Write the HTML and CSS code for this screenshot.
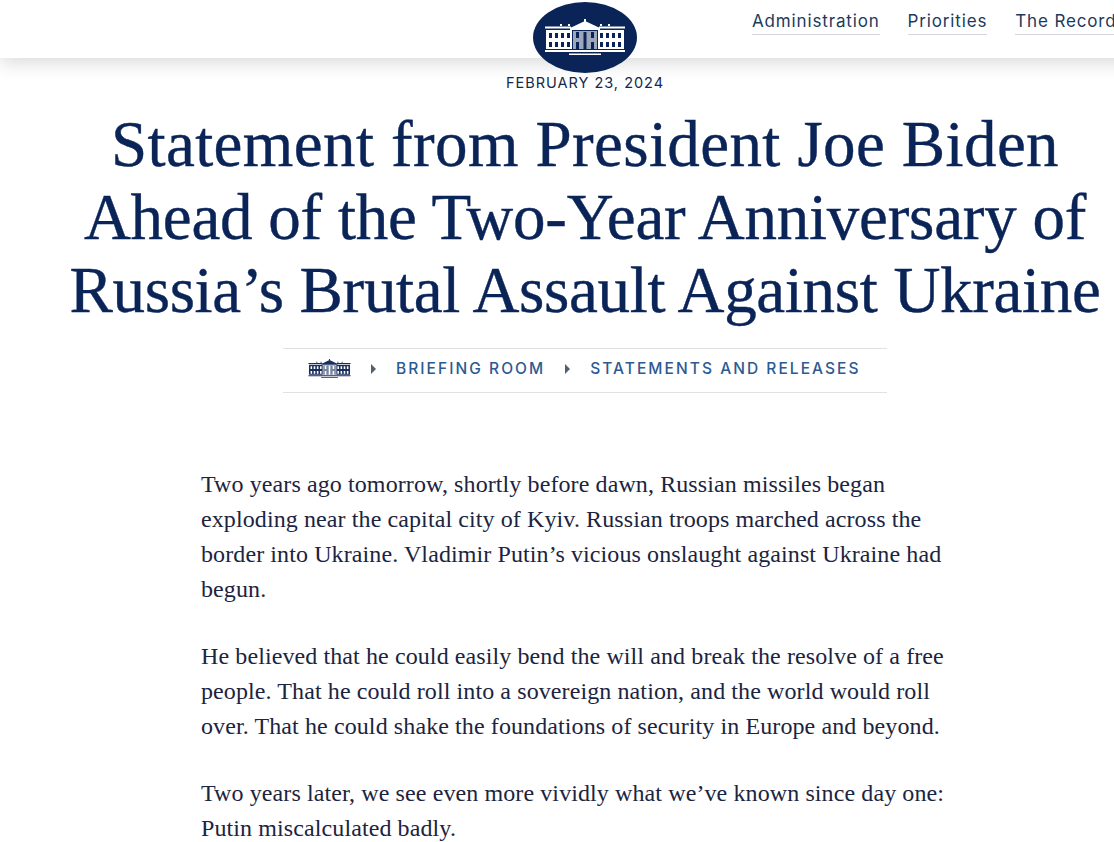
FILE: index.html
```html
<!DOCTYPE html>
<html lang="en">
<head>
<meta charset="utf-8">
<title>Statement from President Joe Biden</title>
<link rel="stylesheet" href="styles.css">
</head>
<body>
<svg class="defs" width="0" height="0" aria-hidden="true">
  <defs>
    <symbol id="wh" viewBox="0 0 80 38">
      <path fill="currentColor" d="M39 0h2v3h-2zM15 5h2v2h-2zM23 5h2v2h-2zM55 5h2v2h-2zM63 5h2v2h-2z"/>
      <path fill="currentColor" d="M25 9 40 2l15 7v2H25z"/>
      <path fill="currentColor" d="M0 7.500h26v2H0zM54 7.500h26v2H54z"/>
      <path fill="currentColor" d="M1 11h26v19H1zM53 11h26v19H53z"/>
      <path fill="currentColor" opacity="0.6" d="M28 12h24v18H28z"/>
      <g class="win">
        <path d="M4 14h3v5H4zM10 14h3v5h-3zM16 14h3v5h-3zM22 14h3v5h-3zM4 23h3v5H4zM10 23h3v5h-3zM16 23h3v5h-3zM22 23h3v5h-3zM55 14h3v5h-3zM61 14h3v5h-3zM67 14h3v5h-3zM73 14h3v5h-3zM55 23h3v5h-3zM61 23h3v5h-3zM67 23h3v5h-3zM73 23h3v5h-3z"/>
        <path d="M31 13h3v6h-3zM38.500 13h3v17h-3zM46 13h3v6h-3zM31 23h3v7h-3zM46 23h3v7h-3z"/>
      </g>
      <path fill="currentColor" d="M0 31h80v2H0zM24 34.500h32V36H24z"/>
    </symbol>
  </defs>
</svg>
<div class="page">
  <header class="site-header">
    <nav class="nav">
      <a class="nav-link">Administration</a>
      <a class="nav-link">Priorities</a>
      <a class="nav-link">The Record</a>
    </nav>
    <a class="logo"><svg class="logo-mark"><use href="#wh"/></svg></a>
  </header>
  <main class="article">
    <p class="date">February 23, 2024</p>
    <h1 class="title"><span class="line line-a">Statement from President Joe Biden</span><span class="line line-b">Ahead of the Two-Year Anniversary of</span><span class="line line-c">Russia’s Brutal Assault Against Ukraine</span></h1>
    <div class="crumbs">
      <svg class="crumb-home"><use href="#wh"/></svg>
      <span class="caret"></span>
      <a class="crumb">Briefing Room</a>
      <span class="caret"></span>
      <a class="crumb">Statements and Releases</a>
    </div>
    <section class="body-copy">
      <p>Two years ago tomorrow, shortly before dawn, Russian missiles began exploding near the capital city of Kyiv. Russian troops marched across the border into Ukraine. Vladimir Putin’s vicious onslaught against Ukraine had begun.</p>
      <p>He believed that he could easily bend the will and break the resolve of a free people. That he could roll into a sovereign nation, and the world would roll over. That he could shake the foundations of security in Europe and beyond.</p>
      <p>Two years later, we see even more vividly what we’ve known since day one: Putin miscalculated badly.</p>
    </section>
  </main>
</div>
</body>
</html>
```
FILE: styles.css
```css
html, body {
  margin: 0;
  padding: 0;
  background: #fff;
  overflow: hidden;
  height: 842px;
}
.defs { display: block; height: 0; }
.page { width: 1170px; color: #0a2458; }
.site-header {
  position: relative;
  height: 58px;
  background: #fff;
  box-shadow: 0 4px 20px rgba(0, 0, 0, 0.16);
  display: flex;
  justify-content: flex-start;
}
.nav {
  display: flex;
  gap: 28px;
  padding: 11px 0 0 752px;
}
.nav-link {
  font: 400 17px/20px "Inter", sans-serif;
  letter-spacing: 0.85px;
  color: #1c3a5e;
  height: 23px;
  white-space: nowrap;
  border-bottom: 1px solid #d4d8de;
}
.logo {
  position: absolute;
  left: 533px;
  top: 2px;
  width: 104px;
  height: 71px;
  border-radius: 50%;
  background: #0a2458;
  display: flex;
  align-items: center;
  justify-content: center;
}
.logo-mark { width: 80px; height: 38px; color: #fff; --win: #0a2458; }
.win { fill: var(--win); }
.article { display: flex; flex-direction: column; align-items: center; background: #fff; }
.date {
  margin: 16px 0 0;
  font: 400 14.500px/17px "Inter", sans-serif;
  text-transform: uppercase;
  color: #122a4e;
  letter-spacing: 1px;
}
.title {
  margin: 17px 0 0;
  font: 400 65px/73px "Liberation Serif", serif;
  -webkit-text-stroke: 0.4px #0a2458;
  text-align: center;
  color: #0a2458;
  white-space: nowrap;
}
.line { display: block; }
.line-a { letter-spacing: 0.38px; }
.line-b { letter-spacing: -0.25px; }
.line-c { letter-spacing: -0.32px; }
.crumbs {
  margin-top: 21px;
  width: 604px;
  height: 45px;
  box-sizing: border-box;
  border-top: 1px solid #dfe1e4;
  border-bottom: 1px solid #dfe1e4;
  display: flex;
  align-items: center;
  padding: 0 0 3px 25px;
}
.crumb-home { width: 43px; height: 20px; color: #1a2f5e; --win: #fff; }
.caret {
  width: 0;
  height: 0;
  margin: 0 20px;
  border-left: 5px solid #555f6e;
  border-top: 5px solid transparent;
  border-bottom: 5px solid transparent;
}
.crumb {
  font: 500 15.500px/18px "Inter", sans-serif;
  text-transform: uppercase;
  letter-spacing: 2.05px;
  color: #2c5a92;
  white-space: nowrap;
}
.body-copy { align-self: flex-start; margin: 74px 0 0 201px; width: 750px; }
.body-copy p {
  margin: 0 0 32px;
  font: 400 24px/35px "Liberation Serif", serif;
  letter-spacing: 0.1px;
  color: #1b2440;
}
```
